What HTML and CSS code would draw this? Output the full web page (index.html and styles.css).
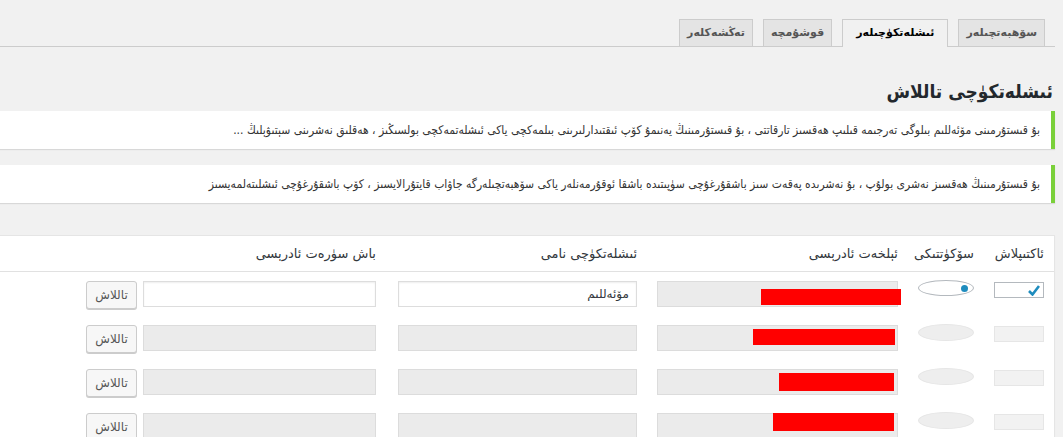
FILE: index.html
```html
<!DOCTYPE html>
<html dir="rtl" lang="ug">
	<head>
		<meta charset="utf-8">
		<title>ئىشلەتكۈچى تاللاش</title>
		<link rel="stylesheet" href="styles.css">
	</head>
	<body>
	<div class="wrap">
		<div class="tabs">
			<a class="tab" href="#">سۆھبەتچىلەر</a>
			<a class="tab active" href="#">ئىشلەتكۈچىلەر</a>
			<a class="tab" href="#">قوشۇمچە</a>
			<a class="tab" href="#">تەڭشەكلەر</a>
		</div>

		<h1 class="title">ئىشلەتكۈچى تاللاش</h1>

		<div class="notice">
			<p>بۇ قىستۇرمىنى مۆئەللىم بىلوگى تەرجىمە قىلىپ ھەقسىز تارقاتتى ، بۇ قىستۇرمىنىڭ يەنىمۇ كۆپ ئىقتىدارلىرىنى بىلمەكچى ياكى ئىشلەتمەكچى بولسىڭىز ، ھەقلىق نەشرىنى سېتىۋېلىڭ ...</p>
		</div>
		<div class="notice">
			<p>بۇ قىستۇرمىنىڭ ھەقسىز نەشرى بولۇپ ، بۇ نەشرىدە پەقەت سىز باشقۇرغۇچى سۈپىتىدە باشقا ئوقۇرمەنلەر ياكى سۆھبەتچىلەرگە جاۋاب قايتۇرالايسىز ، كۆپ باشقۇرغۇچى ئىشلىتەلمەيسىز</p>
		</div>

		<div class="users">
			<div class="row head">
				<div class="cell">ئاكتىپلاش</div>
				<div class="cell">سۆكۈتتىكى</div>
				<div class="cell">ئېلخەت ئادرېسى</div>
				<div class="cell">ئىشلەتكۈچى نامى</div>
				<div class="cell">باش سۈرەت ئادرېسى</div>
			</div>

			<div class="row">
				<div class="cell"><span class="check on"><svg width="12" height="11" viewBox="0 0 12 11"><path d="M1 6 L4.5 9.5 L11 1" fill="none" stroke="#1e8cbe" stroke-width="2.6"/></svg></span></div>
				<div class="cell"><span class="radio on"><span class="dot"></span></span></div>
				<div class="cell"><div class="field email locked"><span class="redact r1"></span></div></div>
				<div class="cell"><input class="field name" type="text" value="مۆئەللىم"></div>
				<div class="cell pick"><input class="field url" type="text"><button class="button" type="button">تاللاش</button></div>
			</div>

			<div class="row">
				<div class="cell"><span class="check"></span></div>
				<div class="cell"><span class="radio"></span></div>
				<div class="cell"><div class="field email locked"><span class="redact r2"></span></div></div>
				<div class="cell"><input class="field name locked" type="text" disabled></div>
				<div class="cell pick"><input class="field url locked" type="text" disabled><button class="button" type="button">تاللاش</button></div>
			</div>

			<div class="row">
				<div class="cell"><span class="check"></span></div>
				<div class="cell"><span class="radio"></span></div>
				<div class="cell"><div class="field email locked"><span class="redact r3"></span></div></div>
				<div class="cell"><input class="field name locked" type="text" disabled></div>
				<div class="cell pick"><input class="field url locked" type="text" disabled><button class="button" type="button">تاللاش</button></div>
			</div>

			<div class="row">
				<div class="cell"><span class="check"></span></div>
				<div class="cell"><span class="radio"></span></div>
				<div class="cell"><div class="field email locked"><span class="redact r4"></span></div></div>
				<div class="cell"><input class="field name locked" type="text" disabled></div>
				<div class="cell pick"><input class="field url locked" type="text" disabled><button class="button" type="button">تاللاش</button></div>
			</div>
		</div>
	</div>
	</body>
</html>
```

FILE: styles.css
```css
body{
	margin:0;
	background-color:#f1f1f1;
	color:#444;
	font-family:"DejaVu Sans", sans-serif;
	font-size:13px;
}
.wrap{
	margin:0 8px 0 -20px;
	padding-top:19px;
}

/* tabs */
.tabs{
	display:flex;
	gap:10px;
	padding-right:10px;
	border-bottom:1px solid #ccc;
}
.tab{
	display:block;
	height:26px;
	line-height:26px;
	padding:0 7px;
	border:1px solid #ccc;
	border-bottom:0;
	background-color:#e4e4e4;
	color:#555;
	font-size:11px;
	font-weight:bold;
	text-decoration:none;
}
.tab.active{
	background-color:#f1f1f1;
	color:#000;
	height:27px;
	padding:0 13px;
	margin-bottom:-1px;
}

.title{
	margin:28px 2px 4px 0;
	font-family:"DejaVu Sans Condensed", "DejaVu Sans", sans-serif;
	font-size:19px;
	line-height:32px;
	font-weight:bold;
	color:#23282d;
}

/* notices */
.notice{
	background-color:#fff;
	border-right:4px solid #7ad03a;
	box-shadow:0 1px 1px rgba(0,0,0,.1);
	padding:9px 11px 9px 12px;
	margin-bottom:16px;
}
.notice p{
	margin:0;
	line-height:20px;
	font-family:"DejaVu Sans Condensed", "DejaVu Sans", sans-serif;
	font-size:12px;
	color:#333;
	white-space:nowrap;
}

/* user list */
.users{
	margin-top:32px;
	background-color:#fff;
	border:1px solid #e5e5e5;
	box-shadow:0 1px 1px rgba(0,0,0,.04);
}
.row{
	display:grid;
	grid-template-columns:70px 76px 261px 261px 1fr;
	padding:9px 0;
}
.row.head{
	padding:8px 0;
	border-bottom:1px solid #e1e1e1;
	line-height:19px;
	font-size:13px;
	color:#32373c;
}
.cell{
	padding:0 10px;
	display:flex;
	align-items:flex-start;
}
.pick{
	gap:6px;
}

.field{
	box-sizing:border-box;
	height:26px;
	margin:0;
	padding:0 7px;
	border:1px solid #ddd;
	background-color:#fff;
	box-shadow:inset 0 1px 2px rgba(0,0,0,.07);
	font-family:"DejaVu Sans", sans-serif;
	font-size:12px;
	color:#32373c;
	direction:rtl;
}
.field.locked{
	background-color:#ebebeb;
	border-color:#dcdcdc;
	box-shadow:none;
}
.email{
	width:241px;
	display:flex;
	padding:0;
}
.name{
	width:239px;
}
.url{
	width:233px;
}
.button{
	box-sizing:border-box;
	width:51px;
	height:28px;
	margin-bottom:-2px;
	padding:0;
	border:1px solid #ccc;
	border-radius:3px;
	background-color:#f7f7f7;
	box-shadow:0 1px 0 #ccc;
	color:#555;
	font-family:"DejaVu Sans", sans-serif;
	font-size:12px;
	cursor:pointer;
}

.check{
	box-sizing:border-box;
	width:50px;
	height:16px;
	margin-top:1px;
	border:1px solid #e6e6e6;
	background-color:#f2f2f2;
	display:flex;
	align-items:center;
	padding-right:3px;
}
.check.on{
	background-color:#fff;
	border-color:#b4b9be;
}
.radio{
	box-sizing:border-box;
	width:56px;
	height:17px;
	margin-top:-1px;
	border:1px solid #e6e6e6;
	border-radius:50%;
	background-color:#eee;
	display:flex;
	align-items:center;
}
.radio.on{
	height:16px;
	background-color:#fff;
	border-color:#b4b9be;
	padding-right:5px;
}
.dot{
	width:7px;
	height:7px;
	border-radius:50%;
	background-color:#1e8cbe;
}

/* blacked out addresses */
.redact{
	display:block;
	background-color:#f00;
	height:16px;
}
.r1{ width:140px; margin:7px -4px 0 0; }
.r2{ width:142px; margin:3px 2px 0 0; }
.r3{ width:115px; height:18px; margin:3px 3px 0 0; }
.r4{ width:121px; height:18px; margin:-1px 3px 0 0; }
```
